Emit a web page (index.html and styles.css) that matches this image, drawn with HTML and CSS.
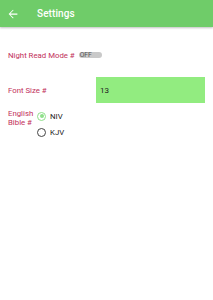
FILE: index.html
```html
<!DOCTYPE html>
<html>
<head>
<meta charset="utf-8">
<link rel="stylesheet" href="styles.css">
</head>
<body>
<header class="bar">
  <svg class="back" width="10" height="10" viewBox="0 0 16 16"><path d="M15 7H3.8l5.1-5.1L8 1 1 8l7 7 .9-.9L3.8 9H15z" fill="#fff"/></svg>
  <span class="title">Settings</span>
</header>
<main class="content">
  <div class="row night">
    <span class="label">Night Read Mode #</span>
    <span class="switch"><span class="off">OFF</span><span class="track"></span></span>
  </div>
  <div class="row font">
    <span class="label">Font Size #</span>
    <div class="input">13</div>
  </div>
  <div class="row bible">
    <span class="label">English<br>Bible #</span>
    <div class="radios">
      <div class="radio"><span class="dot on"></span>NIV</div>
      <div class="radio"><span class="dot"></span>KJV</div>
    </div>
  </div>
</main>
</body>
</html>
```
FILE: styles.css
```css
html, body { margin: 0; padding: 0; background: #fff; }
body { font-family: Roboto, "Liberation Sans", sans-serif; width: 213px; height: 300px; overflow: hidden; }
.bar { height: 27px; background: #6fcc69; display: flex; align-items: center; box-shadow: 0 1px 2px rgba(0,0,0,0.25); }
.back { margin-left: 8px; }
.title { color: #fff; font-size: 10px; font-weight: 500; margin-left: 19px; letter-spacing: 0.1px; }
.content { padding: 0 8px; }
.label { color: #c2305a; font-size: 7.8px; }
.row { display: flex; }
.night { margin-top: 22px; align-items: center; height: 12px; }
.switch { position: relative; margin-left: 4px; width: 23px; height: 8px; display: flex; align-items: center; }
.track { position: absolute; left: 0; top: 1px; width: 23px; height: 6px; border-radius: 3px; background: #c9c9c9; }
.off { position: relative; z-index: 1; font-size: 6.8px; color: #555; padding-left: 1px; }
.font { margin-top: 16px; align-items: center; }
.font .label { width: 88px; }
.input { width: 105px; height: 26px; background: #92ec80; display: flex; align-items: center; padding-left: 4px; font-size: 8px; color: #222; }
.bible { margin-top: 6px; }
.bible .label { width: 29px; line-height: 9px; }
.radios { display: flex; flex-direction: column; gap: 6px; padding-top: 2px; }
.radio { display: flex; align-items: center; font-size: 7.8px; color: #222; height: 10px; }
.dot { width: 7px; height: 7px; border: 1.3px solid #444; border-radius: 50%; margin-right: 4px; box-sizing: content-box; position: relative; }
.dot.on { border-color: #8ee08a; }
.dot.on::after { content: ""; position: absolute; left: 1.5px; top: 1.5px; width: 4px; height: 4px; border-radius: 50%; background: #8ee08a; }
```
